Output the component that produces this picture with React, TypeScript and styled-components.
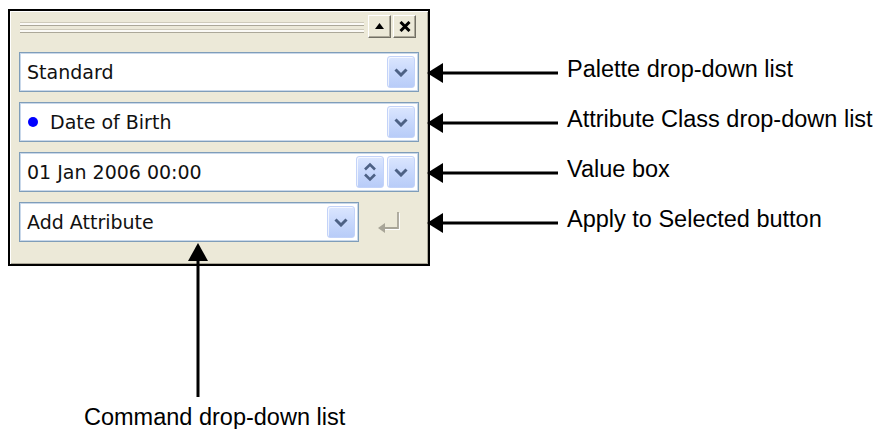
import React from "react";
import styled, { createGlobalStyle } from "styled-components";

const GlobalStyle = createGlobalStyle`
  html, body {
    margin: 0;
    padding: 0;
    background: #ffffff;
  }
  body {
    font-family: "Liberation Sans", Arial, sans-serif;
  }
`;

const Page = styled.div`
  width: 878px;
  height: 429px;
  box-sizing: border-box;
  padding: 9px 0 0 8px;
  display: flex;
  flex-direction: column;
  overflow: hidden;
`;

const TopRow = styled.div`
  display: flex;
  align-items: flex-start;
`;

const Window = styled.div`
  width: 422px;
  height: 257px;
  box-sizing: border-box;
  background: #ece9d8;
  border: 2px solid #000;
  box-shadow: inset 1px 1px 0 #ffffff, inset -1px -1px 0 #aca899;
  padding: 0 9px;
  display: flex;
  flex-direction: column;
  gap: 10px;
  font-family: "DejaVu Sans", Verdana, sans-serif;
  font-size: 19px;
  color: #111;
`;

const TitleBar = styled.div`
  height: 31px;
  box-sizing: border-box;
  padding: 3px 3px 4px 1px;
  display: flex;
  align-items: center;
  gap: 2px;
`;

const Grip = styled.div`
  flex: 1;
  display: flex;
  flex-direction: column;
  gap: 3px;
  margin: 2px 2px 0 0;
`;

const GripLine = styled.div`
  height: 4px;
  background: #fbfaf6;
  border-top: 1px solid #cfcbbb;
  border-bottom: 1px solid #aca899;
  box-sizing: border-box;
`;

const TitleButton = styled.div`
  width: 23px;
  height: 23px;
  box-sizing: border-box;
  display: flex;
  align-items: center;
  justify-content: center;
  background: #ece9d8;
  border-style: solid;
  border-width: 1px;
  border-color: #ffffff #716f64 #716f64 #ffffff;
  box-shadow: inset -1px -1px 0 #aca899;
`;

const Field = styled.div<{ $width?: number }>`
  height: 40px;
  width: ${p => (p.$width ? `${p.$width}px` : "100%")};
  box-sizing: border-box;
  flex-shrink: 0;
  background: #ffffff;
  border: 1px solid #7f9db9;
  box-shadow: inset 0 0 0 1px #c9d8ea;
  display: flex;
  align-items: center;
  gap: 3px;
  padding: 0 3px 0 7px;
`;

const FieldText = styled.span`
  flex: 1;
  white-space: nowrap;
  display: flex;
  align-items: center;
`;

const Bullet = styled.span`
  width: 10px;
  height: 10px;
  border-radius: 50%;
  background: #0000ff;
  margin: 0 12px 0 1px;
`;

const ComboButton = styled.div`
  width: 28px;
  height: 32px;
  box-sizing: border-box;
  border-radius: 3px;
  border: 1px solid #c3d3f9;
  background: linear-gradient(180deg, #dbe6fe 0%, #c8d8fc 50%, #b8ccf8 100%);
  box-shadow: inset 1px 1px 0 rgba(255, 255, 255, 0.7);
  display: flex;
  align-items: center;
  justify-content: center;
`;

const CommandRow = styled.div`
  display: flex;
  align-items: center;
  gap: 18px;
`;

const ApplyButton = styled.div`
  width: 24px;
  height: 26px;
  display: flex;
  align-items: center;
  justify-content: center;
  margin-top: 3px;
`;

const CalloutColumn = styled.div`
  display: flex;
  flex-direction: column;
  padding-top: 39px;
  margin-left: -3px;
`;

const Callout = styled.div`
  height: 50px;
  display: flex;
  align-items: center;
`;

const Label = styled.span`
  font-family: "Liberation Sans", Arial, Helvetica, sans-serif;
  font-size: 23.5px;
  color: #000;
  white-space: nowrap;
  padding-bottom: 8px;
`;

const HLabel = styled(Label)`
  margin-left: 9px;
`;

const BottomCallout = styled.div`
  display: flex;
  flex-direction: column;
  align-items: flex-start;
  margin-top: -23px;
  position: relative;
`;

const UpArrowBox = styled.div`
  margin-left: 180px;
  display: flex;
`;

const BottomLabel = styled(Label)`
  margin: 7px 0 0 76px;
  padding-bottom: 0;
`;

function Chevron() {
  return (
    <svg width="14" height="9" viewBox="0 0 14 9">
      <polyline points="1.5,1.5 7,7 12.5,1.5" fill="none" stroke="#4d6185" strokeWidth="3" />
    </svg>
  );
}

function SpinChevrons() {
  return (
    <svg width="14" height="20" viewBox="0 0 14 20">
      <polyline points="2,7.5 7,2.5 12,7.5" fill="none" stroke="#4d6185" strokeWidth="2.6" />
      <polyline points="2,12.5 7,17.5 12,12.5" fill="none" stroke="#4d6185" strokeWidth="2.6" />
    </svg>
  );
}

function LeftArrow() {
  return (
    <svg width="131" height="20" viewBox="0 0 131 20">
      <polygon points="0,10 16,0 16,20" fill="#000" />
      <rect x="15" y="8.5" width="116" height="3" fill="#000" />
    </svg>
  );
}

function UpArrow() {
  return (
    <svg width="20" height="154" viewBox="0 0 20 154">
      <polygon points="10,0 0,18 20,18" fill="#000" />
      <rect x="8.5" y="17" width="3" height="137" fill="#000" />
    </svg>
  );
}

function ReturnIcon() {
  return (
    <svg width="24" height="26" viewBox="0 0 24 26">
      <g fill="none" strokeWidth="1.8">
        <path d="M22 2 V18 H7" stroke="#ffffff" />
        <path d="M21 1 V17 H6" stroke="#a8a598" />
      </g>
      <polygon points="1,17 8,12 8,22" fill="#a8a598" />
    </svg>
  );
}

const callouts = [
  "Palette drop-down list",
  "Attribute Class drop-down list",
  "Value box",
  "Apply to Selected button",
];

export default function App() {
  return (
    <>
      <GlobalStyle />
      <Page>
        <TopRow>
          <Window>
            <TitleBar>
              <Grip>
                <GripLine />
                <GripLine />
              </Grip>
              <TitleButton>
                <svg width="9" height="6" viewBox="0 0 9 6">
                  <polygon points="4.5,0 9,6 0,6" fill="#000" />
                </svg>
              </TitleButton>
              <TitleButton>
                <svg width="12" height="11" viewBox="0 0 12 11">
                  <path d="M1.5 1 L10.5 10 M10.5 1 L1.5 10" stroke="#000" strokeWidth="3" />
                </svg>
              </TitleButton>
            </TitleBar>

            <Field>
              <FieldText>Standard</FieldText>
              <ComboButton><Chevron /></ComboButton>
            </Field>

            <Field>
              <FieldText><Bullet />Date of Birth</FieldText>
              <ComboButton><Chevron /></ComboButton>
            </Field>

            <Field>
              <FieldText>01 Jan 2006 00:00</FieldText>
              <ComboButton><SpinChevrons /></ComboButton>
              <ComboButton><Chevron /></ComboButton>
            </Field>

            <CommandRow>
              <Field $width={340}>
                <FieldText>Add Attribute</FieldText>
                <ComboButton><Chevron /></ComboButton>
              </Field>
              <ApplyButton><ReturnIcon /></ApplyButton>
            </CommandRow>
          </Window>

          <CalloutColumn>
            {callouts.map(text => (
              <Callout key={text}>
                <LeftArrow />
                <HLabel>{text}</HLabel>
              </Callout>
            ))}
          </CalloutColumn>
        </TopRow>

        <BottomCallout>
          <UpArrowBox><UpArrow /></UpArrowBox>
          <BottomLabel>Command drop-down list</BottomLabel>
        </BottomCallout>
      </Page>
    </>
  );
}
